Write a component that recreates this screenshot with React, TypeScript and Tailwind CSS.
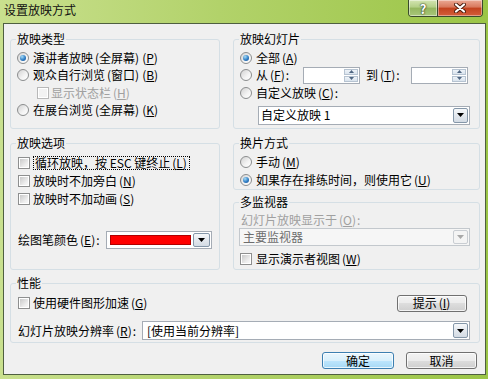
import React from "react";

function Pl() {
  return <span className="ml-[2px]">(</span>;
}
function Pr() {
  return <span className="mr-[1px]">)</span>;
}

function U({ k }: { k: string }) {
  return (
    <>
      <Pl />
      <span className="underline underline-offset-[1px]">{k}</span>
      <Pr />
    </>
  );
}

function Radio({ checked }: { checked?: boolean }) {
  return (
    <span className="flex h-[12px] w-[12px] shrink-0 items-center justify-center rounded-full border border-[#8b8d8e] bg-[linear-gradient(135deg,#d2d2d2,#f4f4f4_60%,#ffffff)]">
      {checked && (
        <span className="h-[6px] w-[6px] rounded-full bg-[radial-gradient(circle_at_35%_30%,#a6dcf7,#2f7dc4_55%,#174f92)]" />
      )}
    </span>
  );
}

function Check({ disabled }: { disabled?: boolean }) {
  return (
    <span
      className={`flex h-[12px] w-[12px] shrink-0 border bg-white p-[1px] ${
        disabled ? "border-[#b8b8b8]" : "border-[#8e8f8f]"
      }`}
    >
      <span
        className={`flex-1 ${
          disabled
            ? "bg-[#f2f2f2]"
            : "bg-[linear-gradient(135deg,#c9c9c9,#eeeeee_70%,#f8f8f8)]"
        }`}
      />
    </span>
  );
}

function Arrow({ disabled, h = "h-[15px]", w = "w-[15px]" }: { disabled?: boolean; h?: string; w?: string }) {
  return (
    <span
      className={`flex ${h} ${w} shrink-0 items-center justify-center rounded-[2px] border ${
        disabled
          ? "border-[#c9cdd2] bg-[#f4f4f4]"
          : "border-[#8597a9] bg-[linear-gradient(#f6f8fa,#e3e8ee_50%,#d3dbe4)]"
      }`}
    >
      <svg width="7" height="4" viewBox="0 0 7 4">
        <path d="M0 0H7L3.5 4Z" fill={disabled ? "#a8a8a8" : "#000"} />
      </svg>
    </span>
  );
}

function Spin() {
  return (
    <span className="flex h-full w-[14px] flex-col gap-[1px]">
      <span className="flex flex-1 items-center justify-center border border-[#b6c3d1] bg-[linear-gradient(#eef3f8,#d9e3ed)]">
        <svg width="5" height="3" viewBox="0 0 5 3">
          <path d="M0 3H5L2.5 0Z" fill="#4f6682" />
        </svg>
      </span>
      <span className="flex flex-1 items-center justify-center border border-[#b6c3d1] bg-[linear-gradient(#eef3f8,#d9e3ed)]">
        <svg width="5" height="3" viewBox="0 0 5 3">
          <path d="M0 0H5L2.5 3Z" fill="#4f6682" />
        </svg>
      </span>
    </span>
  );
}

function Group({
  title,
  className,
  children,
}: {
  title: string;
  className: string;
  children: React.ReactNode;
}) {
  return (
    <fieldset className={`rounded-[3px] border border-[#d5dfe5] ${className}`}>
      <legend className="ml-[5px] px-[1px] leading-[14px]">{title}</legend>
      {children}
    </fieldset>
  );
}

function Btn({
  children,
  primary,
  className,
}: {
  children: React.ReactNode;
  primary?: boolean;
  className: string;
}) {
  return (
    <div
      className={`flex items-center justify-center rounded-[3px] border leading-[14px] shadow-[inset_0_0_0_1px_rgba(255,255,255,0.75)] ${
        primary
          ? "border-[#3c7fb1] bg-[linear-gradient(#eaf6fd,#d9f0fc_50%,#bee6fd_50%,#a7d9f5)]"
          : "border-[#707070] bg-[linear-gradient(#f2f2f2,#ebebeb_50%,#dddddd_50%,#cfcfcf)]"
      } ${className}`}
    >
      {children}
    </div>
  );
}

export default function App() {
  return (
    <div className="flex h-[379px] w-[488px] flex-col bg-[linear-gradient(to_right,#c9e08e,#b2d26a_45%,#9bc546)] font-['Noto_Sans_CJK_SC',sans-serif] text-[12px] leading-[14px] text-black">
      {/* title bar */}
      <div className="flex h-[23px] shrink-0 items-start">
        <div className="pl-[4px] pt-[3px] text-[12px] leading-[14px] text-[#111]">设置放映方式</div>
        <div className="flex-1" />
        <div className="mr-[5px] flex h-[17px] overflow-hidden rounded-b-[4px] border border-t-0 border-[#3a4a2c]">
          <div className="flex w-[28px] items-center justify-center bg-[linear-gradient(#d4e5b2,#b3cf86_45%,#94b65f_50%,#a9c77a)] text-[13px] font-bold leading-[13px] text-white shadow-[inset_0_0_0_1px_rgba(255,255,255,0.45)] [text-shadow:0_0_2px_#1d2a12,0_0_1px_#1d2a12]">
            ?
          </div>
          <div className="flex w-[45px] items-center justify-center border-l border-[#3a4a2c] bg-[linear-gradient(#eba995,#d8775c_45%,#c2421f_50%,#d45e3a)] shadow-[inset_0_0_0_1px_rgba(255,255,255,0.4)]">
            <svg width="12" height="10" viewBox="0 0 12 10">
              <path d="M2 1.5L10 8.5M10 1.5L2 8.5" stroke="#4a1a0c" strokeWidth="4" strokeLinecap="round" />
              <path d="M2 1.5L10 8.5M10 1.5L2 8.5" stroke="#ffffff" strokeWidth="2.2" strokeLinecap="round" />
            </svg>
          </div>
        </div>
      </div>

      {/* client */}
      <div className="ml-[3px] mr-[2px] flex h-[352px] shrink-0 flex-col border border-[#4f5f40] bg-[#f0f0f0] pl-[6px] pt-[8px]">
        {/* row 1 */}
        <div className="flex gap-[13px]">
          <Group title="放映类型" className="h-[97px] w-[210px]">
            <div className="flex flex-col pl-[6px] pt-[3px]">
              <div className="flex h-[17.5px] items-center gap-[4px]">
                <Radio checked />
                <span>
                  演讲者放映<Pl />全屏幕<Pr /><U k="P" />
                </span>
              </div>
              <div className="flex h-[17.5px] items-center gap-[4px]">
                <Radio />
                <span>
                  观众自行浏览<Pl />窗口<Pr /><U k="B" />
                </span>
              </div>
              <div className="flex h-[17.5px] items-center gap-[2px] pl-[20px] text-[#a0a0a0]">
                <Check disabled />
                <span>
                  显示状态栏<U k="H" />
                </span>
              </div>
              <div className="flex h-[17.5px] items-center gap-[4px]">
                <Radio />
                <span>
                  在展台浏览<Pl />全屏幕<Pr /><U k="K" />
                </span>
              </div>
            </div>
          </Group>

          <Group title="放映幻灯片" className="h-[97px] w-[247px]">
            <div className="flex flex-col pl-[6px] pt-[3px]">
              <div className="flex h-[17.5px] items-center gap-[4px]">
                <Radio checked />
                <span>
                  全部<U k="A" />
                </span>
              </div>
              <div className="flex h-[17.5px] items-center">
                <Radio />
                <span className="ml-[4px] w-[47px]">
                  从<U k="F" />:
                </span>
                <span className="flex h-[17px] w-[57px] justify-end border border-[#a5acb5] bg-white p-[1px]">
                  <Spin />
                </span>
                <span className="ml-[6px] w-[45px]">
                  到<U k="T" />:
                </span>
                <span className="flex h-[17px] w-[57px] justify-end border border-[#a5acb5] bg-white p-[1px]">
                  <Spin />
                </span>
              </div>
              <div className="flex h-[17.5px] items-center gap-[4px]">
                <Radio />
                <span>
                  自定义放映<U k="C" />:
                </span>
              </div>
              <div className="ml-[18px] mt-[4px] flex h-[19px] w-[212px] items-center border border-[#a5acb5] bg-white pl-[2px] pr-[1px]">
                <span className="flex-1">自定义放映 1</span>
                <Arrow />
              </div>
            </div>
          </Group>
        </div>

        {/* row 2 */}
        <div className="mt-[7px] flex gap-[13px]">
          <Group title="放映选项" className="h-[134px] w-[210px]">
            <div className="flex flex-col pl-[7px] pt-[4px]">
              <div className="flex h-[18px] items-center gap-[3px]">
                <Check />
                <span className="border border-dotted border-black px-[1px] leading-[12px]">
                  循环放映，按 ESC 键终止<U k="L" />
                </span>
              </div>
              <div className="flex h-[18px] items-center gap-[3px]">
                <Check />
                <span>
                  放映时不加旁白<U k="N" />
                </span>
              </div>
              <div className="flex h-[18px] items-center gap-[3px]">
                <Check />
                <span>
                  放映时不加动画<U k="S" />
                </span>
              </div>
              <div className="mt-[23px] flex h-[18px] items-center">
                <span className="w-[88px]">
                  绘图笔颜色<U k="E" />:
                </span>
                <span className="flex h-[18px] w-[106px] items-center gap-[2px] border border-[#a5acb5] bg-white pl-[3px] pr-[1px]">
                  <span className="h-[10px] flex-1 border border-[#b00000] bg-[#ff0000]" />
                  <Arrow w="w-[17px]" h="h-[14px]" />
                </span>
              </div>
            </div>
          </Group>

          <div className="flex w-[247px] flex-col gap-[5px]">
            <Group title="换片方式" className="h-[54px] w-[247px]">
              <div className="flex flex-col pl-[6px] pt-[3px]">
                <div className="flex h-[18px] items-center gap-[4px]">
                  <Radio />
                  <span>
                    手动<U k="M" />
                  </span>
                </div>
                <div className="flex h-[18px] items-center gap-[4px]">
                  <Radio checked />
                  <span>
                    如果存在排练时间，则使用它<U k="U" />
                  </span>
                </div>
              </div>
            </Group>
            <Group title="多监视器" className="h-[75px] w-[247px]">
              <div className="flex flex-col pt-[4px]">
                <div className="flex h-[14px] items-center pl-[7px] text-[#a0a0a0]">
                  幻灯片放映显示于<U k="O" />:
                </div>
                <div className="ml-[5px] mt-[1px] flex h-[18px] w-[231px] items-center border border-[#c3c8cd] bg-[#f6f6f6] pl-[3px] pr-[1px] text-[#6d6d6d]">
                  <span className="flex-1">主要监视器</span>
                  <Arrow disabled h="h-[14px]" />
                </div>
                <div className="mt-[4px] flex h-[18px] items-center gap-[4px] pl-[6px]">
                  <Check />
                  <span>
                    显示演示者视图<U k="W" />
                  </span>
                </div>
              </div>
            </Group>
          </div>
        </div>

        {/* row 3 */}
        <Group title="性能" className="mt-[6px] h-[67px] w-[470px]">
          <div className="flex flex-col pt-[4px]">
            <div className="flex h-[18px] items-center justify-between pl-[7px] pr-[12px]">
              <div className="flex items-center gap-[3px]">
                <Check />
                <span>
                  使用硬件图形加速<U k="G" />
                </span>
              </div>
              <Btn className="h-[17px] w-[70px]">
                提示<U k="I" />
              </Btn>
            </div>
            <div className="mt-[9px] flex h-[19px] items-center pl-[7px]">
              <span className="w-[124px]">
                幻灯片放映分辨率<U k="R" />:
              </span>
              <span className="flex h-[19px] w-[328px] items-center border border-[#a5acb5] bg-white pl-[4px] pr-[1px]">
                <span className="flex-1">[使用当前分辨率]</span>
                <Arrow />
              </span>
            </div>
          </div>
        </Group>

        {/* buttons */}
        <div className="mt-[9px] flex justify-end gap-[12px] pr-[8px]">
          <Btn primary className="h-[17px] w-[72px]">
            确定
          </Btn>
          <Btn className="h-[17px] w-[71px]">取消</Btn>
        </div>
      </div>
    </div>
  );
}
